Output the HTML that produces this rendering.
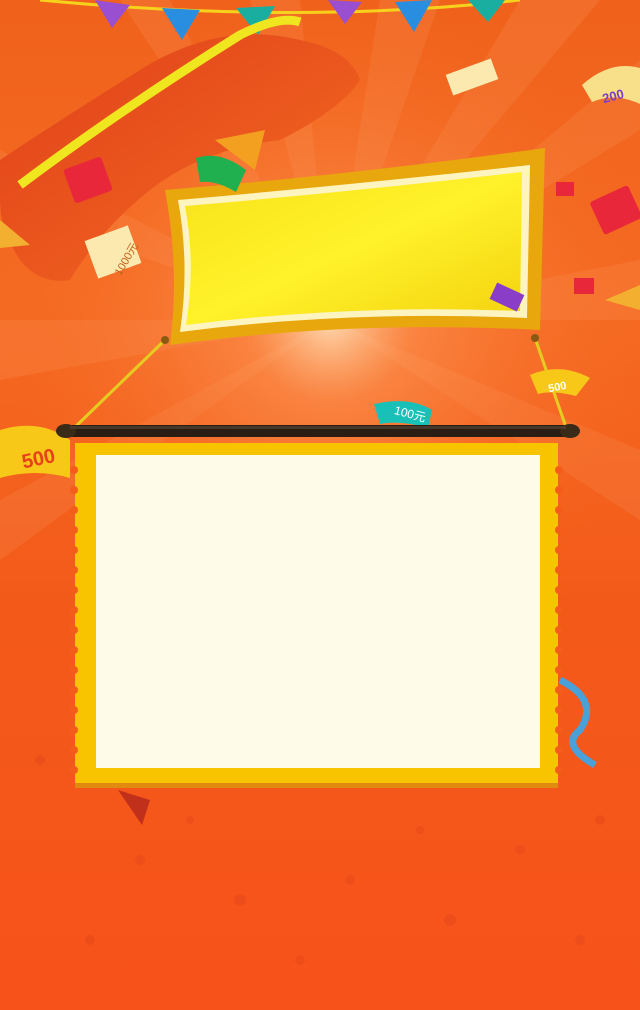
<!DOCTYPE html>
<html><head><meta charset="utf-8"><style>
html,body{margin:0;padding:0}
body{width:640px;height:1010px;overflow:hidden;position:relative;font-family:"Liberation Sans","Noto Sans CJK SC",sans-serif;
background:linear-gradient(180deg,#f0621c 0%,#f56a22 30%,#f35a1a 60%,#f7521a 100%);}
.abs{position:absolute}
</style></head><body>
<svg class="abs" style="left:0;top:0" width="640" height="1010" viewBox="0 0 640 1010">
<defs>
<radialGradient id="glow" cx="330" cy="320" r="330" gradientUnits="userSpaceOnUse">
<stop offset="0" stop-color="#ffe6c0" stop-opacity="0.9"/>
<stop offset="0.25" stop-color="#ffa060" stop-opacity="0.5"/>
<stop offset="1" stop-color="#f56a22" stop-opacity="0"/>
</radialGradient>
<linearGradient id="ban" x1="0" y1="0" x2="1" y2="1">
<stop offset="0" stop-color="#f7e21a"/><stop offset="0.5" stop-color="#fff22a"/><stop offset="1" stop-color="#f3d10e"/>
</linearGradient>
<linearGradient id="cloth" x1="0" y1="0" x2="1" y2="1">
<stop offset="0" stop-color="#e0401a"/><stop offset="0.6" stop-color="#ec5a1e"/><stop offset="1" stop-color="#d03810"/>
</linearGradient>
</defs>
<g opacity="0.1" fill="#ffd0a0">
<polygon points="330,320 250,0 300,0"/><polygon points="330,320 380,0 440,0"/>
<polygon points="330,320 520,0 600,0"/><polygon points="330,320 640,60 640,130"/>
<polygon points="330,320 640,260 640,320"/><polygon points="330,320 640,450 640,520"/>
<polygon points="330,320 0,320 0,380"/><polygon points="330,320 0,150 0,210"/>
<polygon points="330,320 120,0 170,0"/><polygon points="330,320 0,500 0,560"/>
</g>
<rect width="640" height="1010" fill="url(#glow)"/>
<path d="M40,0 Q300,25 520,0" stroke="#f6d21c" stroke-width="3" fill="none"/>
<polygon points="95,0 130,5 112,28" fill="#9a4ed0"/>
<polygon points="162,8 200,10 182,40" fill="#2a8ee0"/>
<polygon points="236,8 275,6 258,35" fill="#1aaea0"/>
<polygon points="328,0 362,2 345,24" fill="#9a4ed0"/>
<polygon points="395,2 432,0 414,32" fill="#2a8ee0"/>
<polygon points="468,0 505,0 488,22" fill="#1aaea0"/>
<path d="M0,160 Q60,120 140,70 Q220,20 300,40 Q350,50 360,80 Q340,110 280,140 Q200,150 150,190 Q100,230 70,280 Q40,285 20,260 Q0,230 0,200Z" fill="url(#cloth)"/>
<path d="M20,185 Q120,110 240,35 Q280,15 300,22" stroke="#f0e620" stroke-width="9" fill="none"/>
<path d="M165,190 Q350,175 545,148 L540,330 Q350,320 170,345 Q180,270 165,190Z" fill="#e8a70c"/>
<path d="M178,200 Q350,185 530,165 L527,318 Q350,310 180,332 Q190,265 178,200Z" fill="#fdf4c0"/>
<path d="M185,206 Q350,192 522,172 L520,311 Q350,304 186,325 Q196,265 185,206Z" fill="url(#ban)"/>
<line x1="165" y1="340" x2="72" y2="430" stroke="#e6cc20" stroke-width="3"/>
<line x1="535" y1="338" x2="567" y2="430" stroke="#e6cc20" stroke-width="3"/>
<circle cx="165" cy="340" r="4" fill="#8a5a10"/><circle cx="535" cy="338" r="4" fill="#8a5a10"/>
<g>
<rect x="68" y="162" width="40" height="36" rx="3" fill="#e8283a" transform="rotate(-20 88 180)"/>
<rect x="595" y="192" width="42" height="36" rx="3" fill="#e8283a" transform="rotate(-25 616 210)"/>
<rect x="90" y="232" width="46" height="40" fill="#fbe9b0" transform="rotate(-20 113 252)"/>
<rect x="448" y="66" width="48" height="22" fill="#fbe9b0" transform="rotate(-20 472 77)"/>
<path d="M582,85 Q610,60 640,68 L640,104 Q615,92 592,102Z" fill="#f8e08a"/>
<path d="M0,430 Q40,418 70,440 L70,478 Q35,468 0,478Z" fill="#f7c818"/>
<path d="M530,375 Q560,362 590,378 L576,396 Q552,390 538,394Z" fill="#f7c818"/>
<path d="M374,404 Q410,396 432,410 L428,428 Q400,420 380,424Z" fill="#18c0b8"/>
<path d="M196,158 Q220,150 246,170 L236,192 Q216,180 200,182Z" fill="#20b050"/>
<rect x="492" y="288" width="30" height="18" fill="#8a3ec8" transform="rotate(25 507 297)"/>
<polygon points="215,140 265,130 255,170" fill="#f3a020"/>
<polygon points="605,300 640,285 640,310" fill="#f3b030"/>
<polygon points="0,220 30,245 0,248" fill="#f3b030"/>
<rect x="556" y="182" width="18" height="14" fill="#e8283a"/>
<rect x="574" y="278" width="20" height="16" fill="#e8283a"/>
<path d="M118,790 L150,800 L142,825Z" fill="#c0301a"/>
<path d="M560,680 Q600,700 580,730 Q560,745 595,765" stroke="#4aa0d8" stroke-width="7" fill="none"/>
</g>
<g fill="#e84a1a" opacity="0.6">
<circle cx="140" cy="860" r="5"/><circle cx="240" cy="900" r="6"/><circle cx="350" cy="880" r="5"/><circle cx="450" cy="920" r="6"/>
<circle cx="520" cy="850" r="5"/><circle cx="90" cy="940" r="5"/><circle cx="300" cy="960" r="5"/><circle cx="580" cy="940" r="5"/>
<circle cx="40" cy="760" r="5"/><circle cx="600" cy="820" r="5"/><circle cx="190" cy="820" r="4"/><circle cx="420" cy="830" r="4"/>
</g>
<text x="22" y="466" font-size="20" font-weight="bold" fill="#e8401a" transform="rotate(-12 35 460)">500</text>
<text x="602" y="100" font-size="13" font-weight="bold" fill="#7a3ec8" transform="rotate(-15 615 95)">200</text>
<text x="548" y="390" font-size="11" font-weight="bold" fill="#fff" transform="rotate(-12 560 386)">500</text>
<text x="394" y="418" font-size="12" fill="#fff" transform="rotate(15 410 414)">100元</text>
<text x="102" y="272" font-size="11" fill="#c0601a" transform="rotate(-60 115 258)">1000元</text>
<rect x="75" y="443" width="483" height="345" fill="#f8c400"/>
<rect x="75" y="783" width="483" height="5" fill="#e08a10"/>
<g fill="#f45c1a">
<g id="sc">
<circle cx="74" cy="470" r="4"/><circle cx="74" cy="490" r="4"/><circle cx="74" cy="510" r="4"/><circle cx="74" cy="530" r="4"/>
<circle cx="74" cy="550" r="4"/><circle cx="74" cy="570" r="4"/><circle cx="74" cy="590" r="4"/><circle cx="74" cy="610" r="4"/>
<circle cx="74" cy="630" r="4"/><circle cx="74" cy="650" r="4"/><circle cx="74" cy="670" r="4"/><circle cx="74" cy="690" r="4"/>
<circle cx="74" cy="710" r="4"/><circle cx="74" cy="730" r="4"/><circle cx="74" cy="750" r="4"/><circle cx="74" cy="770" r="4"/>
</g>
<use href="#sc" x="485"/>
</g>
<rect x="96" y="455" width="444" height="313" fill="#fefbe8"/>
<rect x="62" y="425" width="512" height="12" rx="6" fill="#2a1e14"/>
<ellipse cx="66" cy="431" rx="10" ry="7" fill="#3a2a18"/>
<ellipse cx="570" cy="431" rx="10" ry="7" fill="#3a2a18"/>
<rect x="70" y="426" width="496" height="3" fill="#5a4a38" opacity="0.6"/>
</svg>
</body></html>
